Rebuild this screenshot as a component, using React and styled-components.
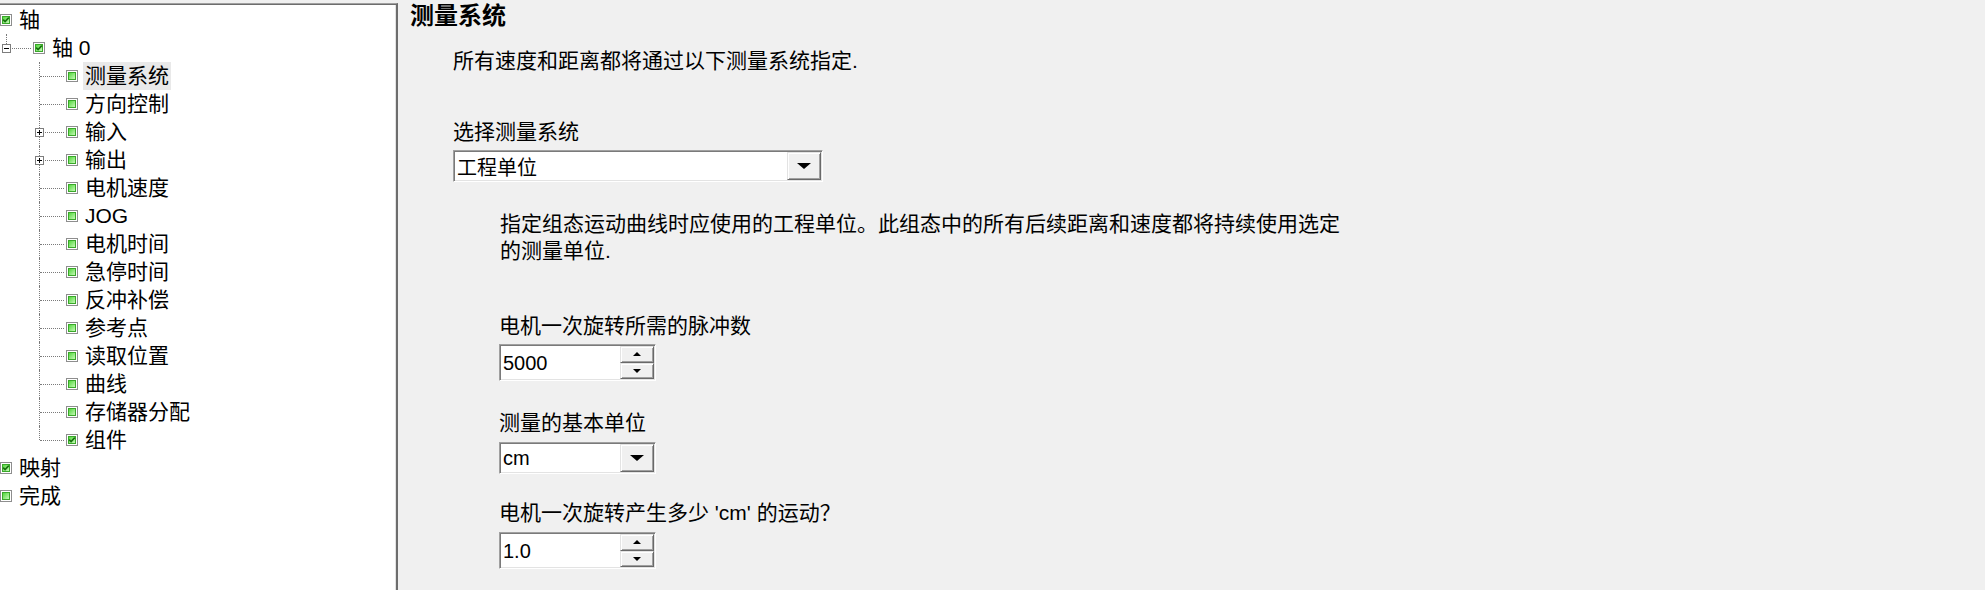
import React from "react";
import styled, { createGlobalStyle } from "styled-components";

const Global = createGlobalStyle`
  html, body { margin: 0; padding: 0; background: #f0f0f0; overflow: hidden; }
  body { font-family: "Liberation Sans", "Noto Sans CJK SC", sans-serif; color: #000; }
  * { box-sizing: border-box; }
`;

const Window = styled.div`
  display: flex;
  width: 1985px;
  height: 590px;
  background: #f0f0f0;
  overflow: hidden;
`;

/* ---------- tree ---------- */
const TreePanel = styled.div`
  flex: none;
  width: 398px;
  margin-top: 3px;
  background: #fff;
  border-top: 1px solid #a0a0a0;
  border-right: 2px solid #6d6d6d;
  box-shadow: inset 0 1px 0 #6d6d6d, inset -1px 0 0 #e3e3e3;
  overflow: hidden;
`;

const Tree = styled.div`
  display: flex;
  flex-direction: column;
  margin-left: -33px;
  padding-top: 2px;
`;

const Row = styled.div`
  display: flex;
  align-items: center;
  height: 28px;
`;

const Indent = styled.span`
  flex: none;
  align-self: stretch;
  width: 33px;
  position: relative;
  &::before {
    content: "";
    display: ${(p) => (p.$line ? "block" : "none")};
    position: absolute;
    left: 6px;
    top: 0;
    bottom: 0;
    border-left: 1px dotted #7a7a7a;
  }
`;

const Connector = styled.span`
  flex: none;
  align-self: stretch;
  width: 33px;
  position: relative;
  &::before {
    content: "";
    position: absolute;
    left: 6px;
    top: 0;
    height: ${(p) => (p.$last ? "14px" : "28px")};
    border-left: 1px dotted #7a7a7a;
  }
  &::after {
    content: "";
    position: absolute;
    left: 7px;
    right: 2px;
    top: 14px;
    border-top: 1px dotted #7a7a7a;
  }
`;

const Expander = styled.span`
  position: absolute;
  z-index: 1;
  left: 2px;
  top: 10px;
  width: 9px;
  height: 9px;
  border: 1px solid #7d7d7d;
  background: #fff;
  &::before {
    content: "";
    position: absolute;
    left: 1px;
    top: 3px;
    width: 5px;
    height: 1px;
    background: #000;
  }
  &::after {
    content: "";
    display: ${(p) => (p.$open ? "none" : "block")};
    position: absolute;
    left: 3px;
    top: 1px;
    width: 1px;
    height: 5px;
    background: #000;
  }
`;

const Box = styled.svg`
  flex: none;
  display: block;
`;

const NodeLabel = styled.span`
  margin-left: 5px;
  padding: 0 2px;
  height: 28px;
  line-height: 28px;
  font-size: 21px;
  white-space: nowrap;
  background: ${(p) => (p.$selected ? "#e9e9e9" : "transparent")};
`;

const CheckBox = ({ checked }) => (
  <Box width="12" height="12" viewBox="0 0 12 12">
    <defs>
      <linearGradient id="grn" x1="0" y1="0" x2="1" y2="1">
        <stop offset="0" stopColor="#52d83b" />
        <stop offset="1" stopColor="#c6f8b8" />
      </linearGradient>
    </defs>
    <rect x="0.5" y="0.5" width="11" height="11" fill="#fff" stroke="#8e8e8e" />
    <rect x="2" y="2" width="8" height="8" fill="#3aa82a" />
    <rect x="3" y="3" width="6" height="6" fill="url(#grn)" />
    {checked && (
      <path d="M3.2 5.6 L5.1 7.6 L8.8 3.6" fill="none" stroke="#17700e" strokeWidth="1.6" />
    )}
  </Box>
);

const treeData = [
  {
    label: "轴",
    checked: true,
    open: true,
    children: [
      {
        label: "轴 0",
        checked: true,
        open: true,
        children: [
          { label: "测量系统", selected: true },
          { label: "方向控制" },
          { label: "输入", collapsed: true },
          { label: "输出", collapsed: true },
          { label: "电机速度" },
          { label: "JOG" },
          { label: "电机时间" },
          { label: "急停时间" },
          { label: "反冲补偿" },
          { label: "参考点" },
          { label: "读取位置" },
          { label: "曲线" },
          { label: "存储器分配" },
          { label: "组件", checked: true },
        ],
      },
    ],
  },
  { label: "映射", checked: true },
  { label: "完成" },
];

function flatten(nodes, guides, out) {
  nodes.forEach((n, i) => {
    const last = i === nodes.length - 1;
    out.push({ node: n, guides, last });
    if (n.children && n.open) flatten(n.children, [...guides, !last], out);
  });
  return out;
}

const rows = flatten(treeData, [], []);

/* ---------- right form ---------- */
const Content = styled.div`
  flex: 1;
  display: flex;
  flex-direction: column;
  align-items: flex-start;
  padding: 4px 0 0 12px;
  font-size: 21px;
`;

const Title = styled.div`
  font-size: 24px;
  font-weight: 700;
  line-height: 24px;
`;

const Section = styled.div`
  margin-left: 43px;
  display: flex;
  flex-direction: column;
  align-items: flex-start;
`;

const Text = styled.div`
  line-height: 24px;
  margin-top: ${(p) => p.$gap || 0}px;
  white-space: nowrap;
`;

const SubSection = styled.div`
  margin-left: 46px;
  display: flex;
  flex-direction: column;
  align-items: flex-start;
`;

const Para = styled.p`
  margin: 28px 0 0 1px;
  width: 850px;
  line-height: 27px;
`;

const Field = styled.div`
  display: flex;
  width: ${(p) => p.$w}px;
  height: ${(p) => p.$h}px;
  margin-top: ${(p) => p.$gap}px;
  background: #fff;
  border-top: 1px solid #a0a0a0;
  border-left: 1px solid #a0a0a0;
  border-right: 1px solid #fff;
  border-bottom: 1px solid #fff;
  box-shadow: inset 1px 1px 0 #7a7a7a, inset -1px -1px 0 #e3e3e3;
`;

const Value = styled.div`
  flex: 1;
  display: flex;
  align-items: center;
  padding-left: 3px;
  padding-top: 1px;
  font-size: 20px;
  white-space: nowrap;
`;

const DropButton = styled.div`
  flex: none;
  width: 34px;
  margin: 1px 1px 1px 0;
  display: flex;
  align-items: center;
  justify-content: center;
  background: #f0f0f0;
  border: 1px solid;
  border-color: #e3e3e3 #696969 #696969 #e3e3e3;
  box-shadow: inset 1px 1px 0 #fff, inset -1px -1px 0 #a0a0a0;
`;

const Triangle = styled.span`
  width: 0;
  height: 0;
  border-left: ${(p) => p.$size}px solid transparent;
  border-right: ${(p) => p.$size}px solid transparent;
  ${(p) =>
    p.$up
      ? `border-bottom: ${Math.ceil(p.$size / 1.2)}px solid #000;`
      : `border-top: ${Math.ceil(p.$size / 1.2)}px solid #000;`}
`;

const SpinColumn = styled.div`
  flex: none;
  width: 34px;
  margin: 1px 1px 1px 0;
  display: flex;
  flex-direction: column;
`;

const SpinButton = styled.div`
  flex: 1;
  display: flex;
  align-items: center;
  justify-content: center;
  background: #f0f0f0;
  border: 1px solid;
  border-color: #e3e3e3 #696969 #696969 #e3e3e3;
  box-shadow: inset 1px 1px 0 #fff, inset -1px -1px 0 #a0a0a0;
`;

const Combo = ({ value, w, gap }) => (
  <Field $w={w} $h={32} $gap={gap}>
    <Value>{value}</Value>
    <DropButton>
      <Triangle $size={7} />
    </DropButton>
  </Field>
);

const Spinner = ({ value, gap }) => (
  <Field $w={157} $h={37} $gap={gap}>
    <Value>{value}</Value>
    <SpinColumn>
      <SpinButton>
        <Triangle $size={4} $up />
      </SpinButton>
      <SpinButton>
        <Triangle $size={4} />
      </SpinButton>
    </SpinColumn>
  </Field>
);

export default function App() {
  return (
    <>
      <Global />
      <Window>
        <TreePanel>
          <Tree>
            {rows.map(({ node, guides, last }, i) => (
              <Row key={i}>
                {guides.map((g, j) => (
                  <Indent key={j} $line={g} />
                ))}
                <Connector $last={last}>
                  {node.children && <Expander $open={node.open} />}
                  {node.collapsed && <Expander $open={false} />}
                </Connector>
                <CheckBox checked={!!node.checked} />
                <NodeLabel $selected={!!node.selected}>{node.label}</NodeLabel>
              </Row>
            ))}
          </Tree>
        </TreePanel>
        <Content>
          <Title>测量系统</Title>
          <Section>
            <Text $gap={21}>所有速度和距离都将通过以下测量系统指定.</Text>
            <Text $gap={47}>选择测量系统</Text>
            <Combo value="工程单位" w={370} gap={6} />
            <SubSection>
              <Para>
                指定组态运动曲线时应使用的工程单位。此组态中的所有后续距离和速度都将持续使用选定的测量单位.
              </Para>
              <Text $gap={50}>电机一次旋转所需的脉冲数</Text>
              <Spinner value="5000" gap={6} />
              <Text $gap={30}>测量的基本单位</Text>
              <Combo value="cm" w={157} gap={7} />
              <Text $gap={27}>电机一次旋转产生多少 'cm' 的运动？</Text>
              <Spinner value="1.0" gap={7} />
            </SubSection>
          </Section>
        </Content>
      </Window>
    </>
  );
}
